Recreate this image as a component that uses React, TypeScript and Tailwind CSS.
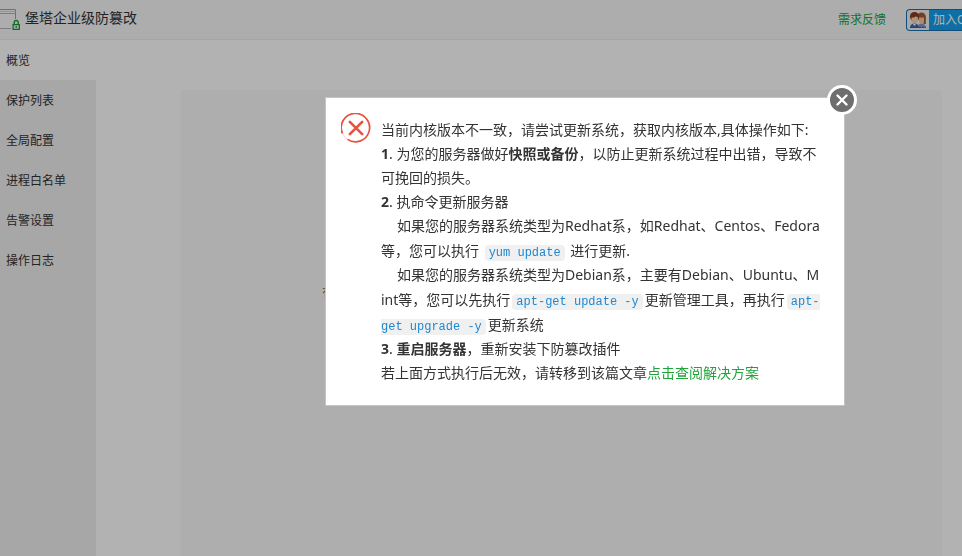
import { useState, type ReactNode } from "react";
import clsx from "clsx";

const MENU = ["概览", "保护列表", "全局配置", "进程白名单", "告警设置", "操作日志"];

function LogoIcon() {
  return (
    <svg width="20" height="24" viewBox="0 0 20 24" fill="none" className="shrink-0">
      <path d="M0 3.5H15.5V13" stroke="#a0a0ac" />
      <path d="M0 5.5H15" stroke="#d4d4de" />
      <path d="M0 7.5H15.5" stroke="#b4b4be" />
      <path d="M0 22.500H11" stroke="#b4b4be" />
      <path d="M14.2 18v-1.500a2 2 0 0 1 4 0V18" stroke="#189a32" strokeWidth="1.300" />
      <rect x="13.100" y="18.600" width="6.200" height="4.800" stroke="#189a32" strokeWidth="1.300" />
      <path d="M16.200 20v2" stroke="#189a32" strokeWidth="1.300" />
    </svg>
  );
}

function GroupIcon() {
  return (
    <svg width="22" height="20" viewBox="0 0 22 20" className="shrink-0">
      <rect width="22" height="20" fill="#eef1f4" />
      <path d="M10.500 18c0-3 1.500-4.500 4-4.500s4.500 1.500 4.500 4.500z" fill="#7f9ad0" />
      <path d="M3 18c0-3.200 2-4.500 4.500-4.500S12 14.800 12 18z" fill="#4a68b0" />
      <circle cx="14.500" cy="6.800" r="4.300" fill="#a8562f" />
      <path d="M16.500 7h2.300v7h-2.300z" fill="#a8562f" />
      <path d="M12 7.500h5v2.500a2.500 3.500 0 0 1-5 0z" fill="#f5c9a0" />
      <circle cx="7.500" cy="6.500" r="4.500" fill="#8a3a22" />
      <path d="M4.500 7.500c2 .3 3.500-.5 4.500-1.300l2 1.300v1.800a3.200 4 0 0 1-6.500 0z" fill="#fbd3ac" />
      <path d="M6 14l1.500 2L9 14z" fill="#fff" />
      <path d="M3 17.300h16" stroke="#2f4f98" strokeDasharray="2 1" />
    </svg>
  );
}

function ErrorIcon() {
  return (
    <svg width="30" height="30" viewBox="0 0 30 30" fill="none" stroke="#e8503f" className="shrink-0">
      <path d="M1.500 20.500A14.200 14.200 0 1 1 6.500 26.400" strokeWidth="1.700" />
      <path d="M6.500 26.400A14.200 14.200 0 0 1 1.500 20.500" strokeWidth="0.500" strokeOpacity="0.5" />
      <path d="M8.800 8.800l12.400 12.400M21.200 8.800L8.800 21.200" strokeWidth="2.600" strokeLinecap="round" />
    </svg>
  );
}

function Code({ children }: { children: ReactNode }) {
  return (
    <code className="mx-0.5 rounded bg-[#f0f0f0] px-1 py-px font-['Liberation_Mono',monospace] text-xs text-[#1e88d2]">
      {children}
    </code>
  );
}

function KernelDialog({ onClose }: { onClose: () => void }) {
  return (
    <div className="fixed inset-0 flex items-start justify-center bg-black/30 pt-[98px] pl-52">
      <div
        role="dialog"
        aria-label="内核版本"
        className="relative flex w-[518px] gap-2.5 bg-white pt-[15px] pr-5 pb-5 pl-[15px] text-sm text-[#333] shadow-[0_0_0_1px_#c4c4c4]"
      >
        <button
          aria-label="关闭"
          onClick={onClose}
          className="absolute -top-[13px] -right-[13px] flex size-[30px] items-center justify-center rounded-full border-3 border-white bg-[#6e6e6e]"
        >
          <svg width="12" height="12" viewBox="0 0 12 12" stroke="#fff" strokeWidth="2.400" strokeLinecap="round">
            <path d="M1.500 1.500l9 9M10.500 1.500l-9 9" />
          </svg>
        </button>
        <ErrorIcon />
        <div className="pt-[5px] leading-6 whitespace-nowrap">
          <p>当前内核版本不一致，请尝试更新系统，获取内核版本,具体操作如下:</p>
          <p>
            <b>1</b>. 为您的服务器做好<b>快照或备份</b>，以防止更新系统过程中出错，导致不
            <br />
            可挽回的损失。
          </p>
          <p>
            <b>2</b>. 执命令更新服务器
          </p>
          <p className="indent-4">如果您的服务器系统类型为Redhat系，如Redhat、Centos、Fedora</p>
          <p className="leading-[25px]">
            等，您可以执行 <Code>yum update</Code> 进行更新.
          </p>
          <p className="indent-4">如果您的服务器系统类型为Debian系，主要有Debian、Ubuntu、M</p>
          <p className="leading-[25px]">
            int等，您可以先执行
            <Code>apt-get update -y</Code>
            更新管理工具，再执行
            <Code>
              apt-
              <br />
              get upgrade -y
            </Code>
            更新系统
          </p>
          <p>
            <b>3</b>. <b>重启服务器</b>，重新安装下防篡改插件
          </p>
          <p>
            若上面方式执行后无效，请转移到该篇文章
            <a href="#help" className="text-[#20a53a]">点击查阅解决方案</a>
          </p>
        </div>
      </div>
    </div>
  );
}

export default function App() {
  const [active, setActive] = useState(0);
  const [open, setOpen] = useState(true);

  return (
    <div className="flex h-screen flex-col overflow-hidden bg-white font-['Noto_Sans','Noto_Sans_CJK_SC',sans-serif] text-xs text-[#333]">
      <header className="flex h-10 shrink-0 items-center border-b border-[#eee] bg-[#f8f8f8]">
        <div className="flex items-center gap-[5px] pb-1">
          <LogoIcon />
          <h1 className="text-sm">堡塔企业级防篡改</h1>
        </div>
        <a href="#feedback" className="ml-auto text-[#20a53a]">需求反馈</a>
        <button className="ml-5 flex h-[22px] w-14 items-center overflow-hidden rounded-l-sm border border-r-0 border-[#1a6fa8] bg-[#12a0ec] text-white">
          <GroupIcon />
          <span className="ml-1 whitespace-nowrap">加入Q</span>
        </button>
      </header>

      <div className="flex min-h-0 flex-1">
        <nav className="w-24 shrink-0 bg-[#f0f0f0]">
          {MENU.map((item, i) => (
            <button
              key={item}
              onClick={() => setActive(i)}
              className={clsx("block h-10 w-full pt-0.5 pl-1.5 text-left", i === active && "bg-white")}
            >
              {item}
            </button>
          ))}
        </nav>
        <main className="flex flex-1 pt-[50px] pr-5 pl-[85px]">
          <div className="flex-1 bg-[#f9f9f9] pt-[195px] pl-[141px] text-[#666]">有</div>
        </main>
      </div>

      {open && <KernelDialog onClose={() => setOpen(false)} />}
    </div>
  );
}
